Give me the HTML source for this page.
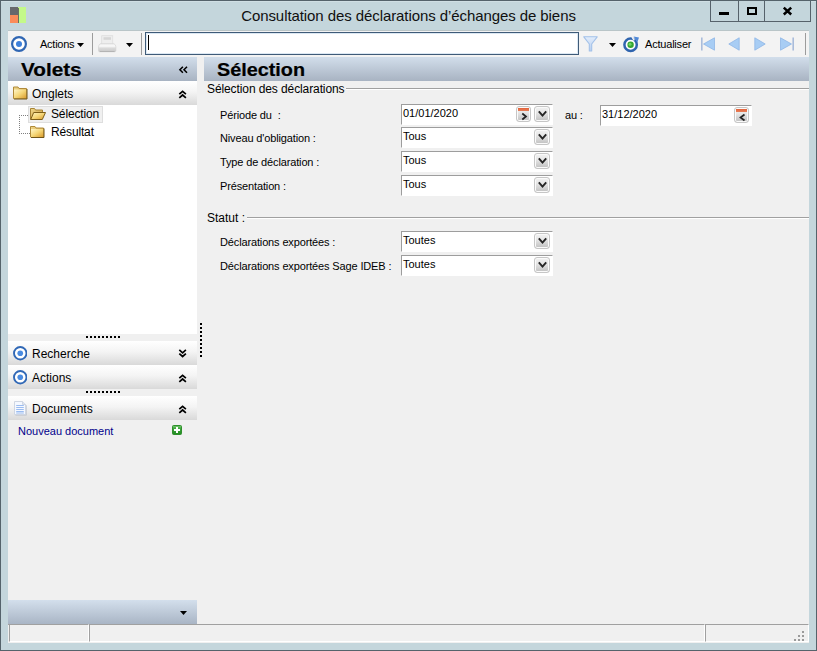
<!DOCTYPE html>
<html><head><meta charset="utf-8">
<style>
*{box-sizing:border-box;margin:0;padding:0}
html,body{width:817px;height:651px;overflow:hidden;background:#c4d6dc;font-family:"Liberation Sans",sans-serif;font-size:11px;color:#000}
div,svg,span{position:absolute}
.t{white-space:nowrap;line-height:14px;height:14px}
#frame{left:0;top:0;width:817px;height:651px;background:#c4d6dc;border:1px solid #55636b}
#title{left:0;top:5.5px;width:817px;text-align:center;font-size:15px;line-height:20px;height:20px;color:#101010;letter-spacing:-0.08px}
#client{left:8px;top:31px;width:801px;height:612px;background:#f0f0f0}
.capbtn{top:1px;height:21px;border:1px solid #56626b;border-top:none;background:#c4d6dc}
.hdr{background:linear-gradient(#d2deeb,#a8b3c2)}
.h1{font-weight:bold;font-size:18px;line-height:24px;height:24px;transform-origin:0 0;transform:scaleX(1.12);-webkit-text-stroke:0.2px #000}
.sec{left:0;width:189px;height:24px;background:linear-gradient(#ffffff 0%,#f4f4f4 45%,#d9d9d9 100%)}
.sec .t{left:24px;top:6px;font-size:12px}
.fld{background:#fff;border:1px solid #9d9d9d;border-right-color:#fff;border-bottom-color:#fff;height:21px}
.fld .t{left:1px;top:1px;font-size:11px}
.btn{width:15px;height:16px;top:1px;border:1px solid #c6c6c6;border-radius:3px;background:linear-gradient(#f2f2f2 0%,#e6e6e6 40%,#c0c0c0 100%);box-shadow:inset 0 0 0 1px #fafafa}
.lbl{font-size:11px;letter-spacing:-0.14px}
</style></head><body>
<div id="frame"></div>
<div style="left:1px;top:1px;width:815px;height:1px;background:#d0dfe4"></div>
<!-- app icon -->
<div style="left:10px;top:7px;width:8px;height:8px;background:#67686c"></div>
<div style="left:10px;top:15px;width:8px;height:8px;background:#fb8c5a"></div>
<div style="left:18px;top:7px;width:8px;height:16px;background:#c4f98a"></div>
<div style="left:18px;top:8px;width:1px;height:15px;background:#6a7060"></div>
<div id="title" class="t">Consultation des déclarations d’échanges de biens</div>
<!-- caption buttons -->
<div class="capbtn" style="left:710px;width:29px"></div>
<div class="capbtn" style="left:738px;width:27px"></div>
<div class="capbtn" style="left:764px;width:47px"></div>
<div style="left:719px;top:12px;width:10px;height:3px;background:#000"></div>
<div style="left:747px;top:7px;width:10px;height:8px;border:2px solid #000;border-top-width:2px"></div>
<svg style="left:782px;top:6px" width="11" height="10" viewBox="0 0 11 10"><path d="M1.8 1.7 L9.2 8.5 M9.2 1.7 L1.8 8.5" stroke="#000" stroke-width="2.5"/></svg>

<div style="left:8px;top:30px;width:801px;height:1px;background:#b9c5c8"></div>
<div id="client">
<svg width="0" height="0" style="left:0;top:0"><defs>
<linearGradient id="fg" x1="0" y1="0" x2="1" y2="1"><stop offset="0" stop-color="#fff6c8"/><stop offset="0.5" stop-color="#f5d676"/><stop offset="1" stop-color="#d99a2b"/></linearGradient>
<linearGradient id="fb" x1="0" y1="0" x2="1" y2="1"><stop offset="0" stop-color="#f0d88c"/><stop offset="1" stop-color="#c89a3c"/></linearGradient>
<linearGradient id="bl" x1="0" y1="0" x2="0" y2="1"><stop offset="0" stop-color="#e3edfb"/><stop offset="1" stop-color="#b7cff0"/></linearGradient>
</defs></svg>
 <!-- toolbar -->
 <div id="tb" style="left:0;top:0;width:801px;height:26px;background:#f3f3f3"></div>
 <svg style="left:3px;top:5px" width="16" height="16" viewBox="0 0 16 16"><circle cx="8" cy="8" r="6.9" fill="#fff" stroke="#2f66b3" stroke-width="2.2"/><circle cx="8" cy="8" r="3" fill="#3d80da"/></svg>
 <div class="t" style="left:32px;top:6px;font-size:11px;letter-spacing:-0.25px">Actions</div>
 <svg style="left:69px;top:12px" width="7" height="4" viewBox="0 0 7 4"><path d="M0 0H7L3.5 4Z" fill="#000"/></svg>
 <div style="left:84px;top:2px;width:1px;height:22px;background:#9c9c9c"></div>
 <!-- printer (disabled) -->
 <svg style="left:90px;top:4px" width="19" height="18" viewBox="0 0 19 18">
  <defs><linearGradient id="pg" x1="0" y1="0" x2="0" y2="1"><stop offset="0" stop-color="#e9e9e9"/><stop offset="0.3" stop-color="#fbfbfb"/><stop offset="0.55" stop-color="#dadada"/><stop offset="1" stop-color="#c9c9c9"/></linearGradient></defs>
  <rect x="3.7" y="0.7" width="11" height="9" fill="#eeeeee" stroke="#dedede" stroke-width="0.8"/>
  <rect x="5.5" y="2.2" width="7.5" height="2.6" fill="#d6d6d6"/>
  <path d="M2.6 8.6 H15.8 Q17.9 9.6 17.9 12 V15.6 Q17.9 16.8 16.6 16.8 H1.8 Q0.5 16.8 0.5 15.6 V12 Q0.5 9.6 2.6 8.6 Z" fill="url(#pg)" stroke="#d2d2d2" stroke-width="0.6"/>
  <rect x="1.6" y="15.9" width="15.2" height="1.2" rx="0.6" fill="#b4b4b4"/>
 </svg>
 <svg style="left:118px;top:12px" width="7" height="4" viewBox="0 0 7 4"><path d="M0 0H7L3.5 4Z" fill="#000"/></svg>
 <div style="left:133px;top:2px;width:1px;height:22px;background:#9c9c9c"></div>
 <!-- textbox -->
 <div style="left:137px;top:1px;width:434px;height:23px;background:#fff;border:1px solid #3f5b78;box-shadow:inset 0 0 0 1px #dce8f3"></div>
 <div style="left:140px;top:4px;width:1px;height:15px;background:#000"></div>
 <!-- funnel -->
 <svg style="left:575px;top:5px" width="15" height="16" viewBox="0 0 15 16"><path d="M0.8 0.8 H14.2 L8.7 8 V15 H6.3 V8 Z" fill="url(#bl)" stroke="#a3c1e9" stroke-width="1.1" stroke-linejoin="round"/></svg>
 <svg style="left:601px;top:12px" width="7" height="4" viewBox="0 0 7 4"><path d="M0 0H7L3.5 4Z" fill="#000"/></svg>
 <!-- refresh -->
 <svg style="left:614px;top:5px" width="18" height="17" viewBox="0 0 18 17">
  <circle cx="8.6" cy="8.8" r="6.2" fill="#fdfdfd" stroke="#2f64ae" stroke-width="2.5"/>
  <path d="M10.2 1.2 L12.2 4.4" stroke="#f3f3f3" stroke-width="1.6"/>
  <path d="M11.6 0.4 L17 1.4 L15.2 6.8 Q14 3.6 11.6 0.4 Z" fill="#4f88d8"/>
  <circle cx="8.6" cy="8.8" r="3.2" fill="#34a52f"/><circle cx="8" cy="8.2" r="1.5" fill="#6fd268"/>
 </svg>
 <div class="t" style="left:637px;top:6px;font-size:11px;letter-spacing:-0.2px">Actualiser</div>
 <!-- nav -->
 <svg style="left:692px;top:6px" width="16" height="14" viewBox="0 0 16 14"><rect x="1" y="0.5" width="1.6" height="13" fill="#a9bcdb"/><path d="M14.5 0.8 V13.2 L3.5 7 Z" fill="#a8cdf4" stroke="#8fb6e6" stroke-width="0.8"/></svg>
 <svg style="left:720px;top:6px" width="12" height="14" viewBox="0 0 12 14"><path d="M11.2 0.8 V13.2 L0.8 7 Z" fill="#a8cdf4" stroke="#8fb6e6" stroke-width="0.8"/></svg>
 <svg style="left:746px;top:6px" width="12" height="14" viewBox="0 0 12 14"><path d="M0.8 0.8 V13.2 L11.2 7 Z" fill="#a8cdf4" stroke="#8fb6e6" stroke-width="0.8"/></svg>
 <svg style="left:771px;top:6px" width="16" height="14" viewBox="0 0 16 14"><rect x="13.4" y="0.5" width="1.6" height="13" fill="#a9bcdb"/><path d="M1.5 0.8 V13.2 L12.5 7 Z" fill="#a8cdf4" stroke="#8fb6e6" stroke-width="0.8"/></svg>
 <div style="left:797px;top:2px;width:1px;height:22px;background:#9c9c9c"></div>

 <!-- left panel -->
 <div id="left" style="left:0;top:26px;width:189px;height:567px">
  <div class="hdr" style="left:0;top:0;width:189px;height:24px"></div>
  <div class="t h1" style="left:13px;top:1px;transform:scaleX(1.15)">Volets</div>
  <svg style="left:170px;top:9px" width="10" height="8" viewBox="0 0 10 8"><path d="M4.9 0.7 L1.9 3.7 L4.9 6.7 M9 0.7 L6 3.7 L9 6.7" fill="none" stroke="#000" stroke-width="1.55"/></svg>
  <!-- Onglets -->
  <div class="sec" style="top:24px">
   <svg style="left:5px;top:5px" width="15" height="14" viewBox="0 0 15 14"><path d="M0.5 1 H5 L6 2.5 H13.5 V12.5 H0.5 Z" fill="url(#fb)" stroke="#b08a3a"/><rect x="1" y="3.5" width="12.5" height="9" fill="url(#fg)"/><path d="M14 3 V13 H1" fill="none" stroke="#6f5418" stroke-width="1"/></svg>
   <div class="t">Onglets</div>
   <svg style="left:170px;top:9px" width="9" height="9" viewBox="0 0 9 9"><path d="M1.3 4.2 L4.6 1.3 L7.9 4.2 M1.3 7.9 L4.6 5 L7.9 7.9" fill="none" stroke="#000" stroke-width="1.7"/></svg>
  </div>
  <div style="left:0;top:48px;width:189px;height:229px;background:#fff"></div>
  <!-- tree -->
  <div style="left:11px;top:58px;width:11px;height:19px;border-left:1px dotted #808080;border-top:1px dotted #808080;border-bottom:1px dotted #808080"></div>
  <div style="left:20px;top:49px;width:75px;height:17px;background:#f0f0f0;border:1px solid #dedede"></div>
  <svg style="left:22px;top:51px" width="16" height="12" viewBox="0 0 16 12"><path d="M0.5 11.5 V0.5 H4.5 L5.5 2 H12.5 V4.5" fill="url(#fb)" stroke="#a88434"/><path d="M0.7 11.5 L3.7 4.5 H15.5 L12.3 11.5 Z" fill="url(#fg)" stroke="#7d5e18"/></svg>
  <div class="t" style="left:43px;top:50px;font-size:12px;letter-spacing:-0.15px">Sélection</div>
  <svg style="left:22px;top:69px" width="15" height="12" viewBox="0 0 15 12"><path d="M0.5 0.5 H5 L6 2 H13.5 V11 H0.5 Z" fill="url(#fb)" stroke="#b08a3a"/><rect x="1" y="3" width="12.5" height="8" fill="url(#fg)"/><path d="M14 2.5 V11.5 H1" fill="none" stroke="#6f5418" stroke-width="1"/></svg>
  <div class="t" style="left:43px;top:68px;font-size:12px;letter-spacing:-0.15px">Résultat</div>
  <!-- splitter dots -->
  <div style="left:78px;top:279px;width:34px;height:2px;background:repeating-linear-gradient(90deg,#000 0 2px,transparent 2px 4px)"></div>
  <div class="sec" style="top:284px">
   <svg style="left:4.5px;top:5px" width="14.5" height="14.5" viewBox="0 0 16 16"><circle cx="8" cy="8" r="6.9" fill="#fff" stroke="#3068b6" stroke-width="2.1"/><circle cx="8" cy="8" r="3.1" fill="#4a8be0"/></svg>
   <div class="t">Recherche</div>
   <svg style="left:170px;top:8px" width="9" height="9" viewBox="0 0 9 9"><path d="M1.3 0.9 L4.6 3.8 L7.9 0.9 M1.3 4.6 L4.6 7.5 L7.9 4.6" fill="none" stroke="#000" stroke-width="1.7"/></svg>
  </div>
  <div class="sec" style="top:308px">
   <svg style="left:4.5px;top:5px" width="14.5" height="14.5" viewBox="0 0 16 16"><circle cx="8" cy="8" r="6.9" fill="#fff" stroke="#3068b6" stroke-width="2.1"/><circle cx="8" cy="8" r="3.1" fill="#4a8be0"/></svg>
   <div class="t">Actions</div>
   <svg style="left:170px;top:9px" width="9" height="9" viewBox="0 0 9 9"><path d="M1.3 4.2 L4.6 1.3 L7.9 4.2 M1.3 7.9 L4.6 5 L7.9 7.9" fill="none" stroke="#000" stroke-width="1.7"/></svg>
  </div>
  <div style="left:78px;top:334px;width:34px;height:2px;background:repeating-linear-gradient(90deg,#000 0 2px,transparent 2px 4px)"></div>
  <div class="sec" style="top:339px">
   <svg style="left:6px;top:5px" width="13" height="15" viewBox="0 0 13 15"><path d="M1.5 1.5 H9.5 L12.6 4.6 V14.6 H1.5 Z" fill="#b9bec8"/><path d="M0.5 0.5 H8.5 L11.5 3.5 V13.5 H0.5 Z" fill="#f4f8ff" stroke="#cfd6e2"/><path d="M8.5 0.5 V3.5 H11.5" fill="#dfe6f2" stroke="#cfd6e2"/><path d="M2.2 4.5 H9.8 M2.2 6.5 H9.8 M2.2 8.5 H9.8 M2.2 10.5 H9.8 M2.2 12 H9.8" stroke="#9bbcf0" stroke-width="1"/></svg>
   <div class="t">Documents</div>
   <svg style="left:170px;top:9px" width="9" height="9" viewBox="0 0 9 9"><path d="M1.3 4.2 L4.6 1.3 L7.9 4.2 M1.3 7.9 L4.6 5 L7.9 7.9" fill="none" stroke="#000" stroke-width="1.7"/></svg>
  </div>
  <div class="t" style="left:10px;top:367px;font-size:11px;color:#00008b">Nouveau document</div>
  <svg style="left:164px;top:368px" width="10" height="10" viewBox="0 0 10 10"><defs><linearGradient id="gp" x1="0" y1="0" x2="0" y2="1"><stop offset="0" stop-color="#7cc977"/><stop offset="0.35" stop-color="#3da83a"/><stop offset="1" stop-color="#218a22"/></linearGradient></defs><rect x="0.5" y="0.5" width="9" height="9" rx="1" fill="url(#gp)" stroke="#2f8f2c"/><path d="M5 2 V8 M2 5 H8" stroke="#fff" stroke-width="2"/></svg>
  <div class="hdr" style="left:0;top:543px;width:189px;height:24px;background:linear-gradient(#d3dfec,#a9b5c5)"></div>
  <svg style="left:172px;top:554px" width="7" height="4" viewBox="0 0 7 4"><path d="M0 0H7L3.5 4Z" fill="#000"/></svg>
 </div>
 <!-- vertical splitter dots -->
 <div style="left:192px;top:292px;width:2px;height:34px;background:repeating-linear-gradient(180deg,#000 0 2px,transparent 2px 4px)"></div>

 <!-- right panel -->
 <div id="right" style="left:196px;top:26px;width:605px;height:567px">
  <div class="hdr" style="left:0;top:0;width:605px;height:24px"></div>
  <div class="t h1" style="left:13px;top:1px;transform:scaleX(1.10)">Sélection</div>
  <div class="t" style="left:3px;top:25px;font-size:12px;letter-spacing:-0.1px">Sélection des déclarations</div>
  <div style="left:142px;top:31px;width:463px;height:2px;background:linear-gradient(#a0a0a0 50%,#fff 50%)"></div>
  <div class="t lbl" style="left:16px;top:51px">Période du&nbsp; :</div>
  <div class="t lbl" style="left:16px;top:74px">Niveau d'obligation :</div>
  <div class="t lbl" style="left:16px;top:98px">Type de déclaration :</div>
  <div class="t lbl" style="left:16px;top:122px">Présentation :</div>
  <div class="fld" style="left:197px;top:47px;width:152px"><div class="t">01/01/2020</div>
    <div class="btn" style="left:114px"><div style="left:1px;top:1px;width:11px;height:3px;background:linear-gradient(#e2623a,#e8805a)"></div><svg style="left:3px;top:5px" width="9" height="9" viewBox="0 0 9 9"><path d="M2.3 1.5 L6 4.5 L2.3 7.5" fill="none" stroke="#222" stroke-width="1.7"/></svg></div>
    <div class="btn" style="left:132px;width:16px"><svg style="left:3px;top:3px" width="9" height="8" viewBox="0 0 9 8"><path d="M0.8 1.3 L4.5 5.6 L8.2 1.3" fill="none" stroke="#262626" stroke-width="1.9"/></svg></div>
  </div>
  <div class="fld" style="left:197px;top:70px;width:152px"><div class="t">Tous</div>
    <div class="btn" style="left:132px;width:16px"><svg style="left:3px;top:3px" width="9" height="8" viewBox="0 0 9 8"><path d="M0.8 1.3 L4.5 5.6 L8.2 1.3" fill="none" stroke="#262626" stroke-width="1.9"/></svg></div>
  </div>
  <div class="fld" style="left:197px;top:94px;width:152px"><div class="t">Tous</div>
    <div class="btn" style="left:132px;width:16px"><svg style="left:3px;top:3px" width="9" height="8" viewBox="0 0 9 8"><path d="M0.8 1.3 L4.5 5.6 L8.2 1.3" fill="none" stroke="#262626" stroke-width="1.9"/></svg></div>
  </div>
  <div class="fld" style="left:197px;top:118px;width:152px"><div class="t">Tous</div>
    <div class="btn" style="left:132px;width:16px"><svg style="left:3px;top:3px" width="9" height="8" viewBox="0 0 9 8"><path d="M0.8 1.3 L4.5 5.6 L8.2 1.3" fill="none" stroke="#262626" stroke-width="1.9"/></svg></div>
  </div>
  <div class="t lbl" style="left:361px;top:51px">au :</div>
  <div class="fld" style="left:396px;top:48px;width:152px"><div class="t">31/12/2020</div>
    <div class="btn" style="left:132.5px"><div style="left:1px;top:1px;width:11px;height:3px;background:linear-gradient(#e2623a,#e8805a)"></div><svg style="left:3px;top:5px" width="9" height="9" viewBox="0 0 9 9"><path d="M6.5 1.5 L2.5 4.5 L6.5 7.5" fill="none" stroke="#222" stroke-width="1.7"/></svg></div>
  </div>
  <div class="t" style="left:3px;top:154px;font-size:12px">Statut :</div>
  <div style="left:43px;top:160px;width:562px;height:2px;background:linear-gradient(#a0a0a0 50%,#fff 50%)"></div>
  <div class="t lbl" style="left:16px;top:178px">Déclarations exportées :</div>
  <div class="t lbl" style="left:16px;top:202px">Déclarations exportées Sage IDEB :</div>
  <div class="fld" style="left:197px;top:174px;width:152px"><div class="t">Toutes</div>
    <div class="btn" style="left:132px;width:16px"><svg style="left:3px;top:3px" width="9" height="8" viewBox="0 0 9 8"><path d="M0.8 1.3 L4.5 5.6 L8.2 1.3" fill="none" stroke="#262626" stroke-width="1.9"/></svg></div>
  </div>
  <div class="fld" style="left:197px;top:198px;width:152px"><div class="t">Toutes</div>
    <div class="btn" style="left:132px;width:16px"><svg style="left:3px;top:3px" width="9" height="8" viewBox="0 0 9 8"><path d="M0.8 1.3 L4.5 5.6 L8.2 1.3" fill="none" stroke="#262626" stroke-width="1.9"/></svg></div>
  </div>
 </div>

 <!-- status bar -->
 <div style="left:1px;top:593px;width:80px;height:18px;border:1px solid #a0a0a0;border-right-color:#fff;border-bottom-color:#fff"></div>
 <div style="left:81px;top:593px;width:616px;height:18px;border:1px solid #a0a0a0;border-right-color:#fff;border-bottom-color:#fff"></div>
 <div style="left:697px;top:593px;width:104px;height:18px;border:1px solid #a0a0a0;border-right-color:#fff;border-bottom-color:#fff"></div>
 <div style="left:0px;top:593px;width:1px;height:1px;background:#a0a0a0"></div>
 <svg style="left:786px;top:600px" width="12" height="12" viewBox="0 0 12 12"><g fill="#9a9a9a"><rect x="8" y="0" width="2" height="2"/><rect x="4" y="4" width="2" height="2"/><rect x="8" y="4" width="2" height="2"/><rect x="0" y="8" width="2" height="2"/><rect x="4" y="8" width="2" height="2"/><rect x="8" y="8" width="2" height="2"/></g></svg>
</div>
</body></html>
